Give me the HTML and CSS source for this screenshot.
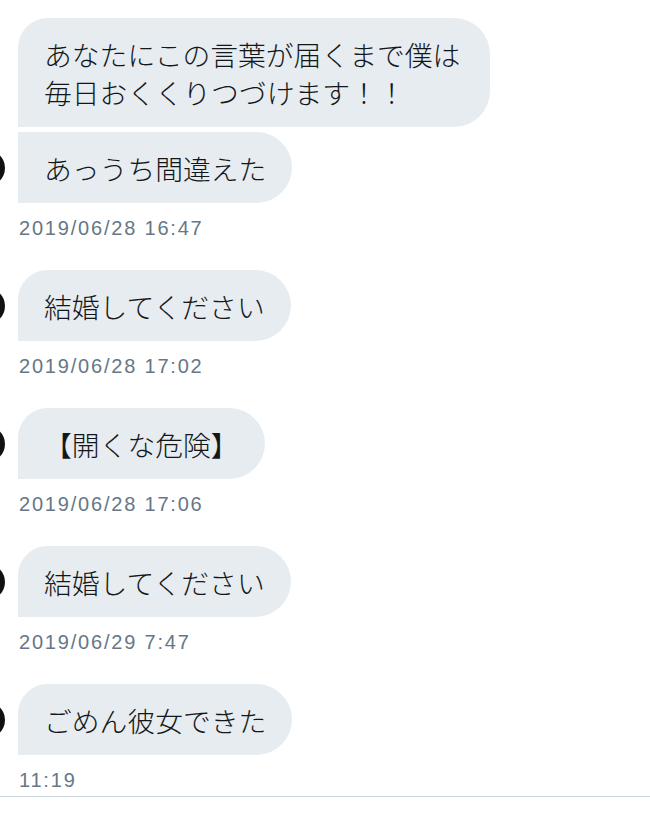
FILE: index.html
```html
<!DOCTYPE html>
<html lang="ja">
<head>
  <meta charset="UTF-8">
  <title>メッセージ</title>
  <link rel="stylesheet" href="styles.css">
</head>
<body>

<div class="chat">
  <div class="grupo">
    <div class="linha">
      <div class="avatar vazio"></div>
      <div class="balao primeiro">あなたにこの言葉が届くまで僕は毎日おくくりつづけます！！</div>
    </div>
    <div class="linha">
      <div class="avatar"></div>
      <div class="balao seguinte">あっうち間違えた</div>
    </div>
    <div class="hora">2019/06/28 16:47</div>
  </div>

  <div class="grupo">
    <div class="linha">
      <div class="avatar"></div>
      <div class="balao">結婚してください</div>
    </div>
    <div class="hora">2019/06/28 17:02</div>
  </div>

  <div class="grupo">
    <div class="linha">
      <div class="avatar"></div>
      <div class="balao">【開くな危険】</div>
    </div>
    <div class="hora">2019/06/28 17:06</div>
  </div>

  <div class="grupo">
    <div class="linha">
      <div class="avatar"></div>
      <div class="balao">結婚してください</div>
    </div>
    <div class="hora">2019/06/29 7:47</div>
  </div>

  <div class="grupo ultimo">
    <div class="linha">
      <div class="avatar"></div>
      <div class="balao">ごめん彼女できた</div>
    </div>
    <div class="hora">11:19</div>
  </div>
</div>

<div class="divisor"></div>

</body>
</html>
```

FILE: styles.css
```css
* {
  box-sizing: border-box;
  margin: 0;
  padding: 0;
}

body {
  background: #fff;
  width: 650px;
  height: 820px;
  overflow: hidden;
  font-family: 'Noto Sans CJK JP', 'Noto Sans', sans-serif;
}

.chat {
  padding-top: 18px;
}

.grupo {
  margin-bottom: 30px;
}

.grupo.ultimo {
  margin-bottom: 4px;
}

.linha {
  display: flex;
  align-items: center;
  gap: 13px;
  margin-left: -31px;
}

.linha + .linha {
  margin-top: 5px;
}

.avatar {
  width: 36px;
  height: 36px;
  border-radius: 50%;
  background: #111;
  flex-shrink: 0;
}

.avatar.vazio {
  background: transparent;
}

.balao {
  background: #e6ecf0;
  color: #14171a;
  font-size: 27.8px;
  font-weight: 300;
  line-height: 38px;
  padding: 16.5px 26px;
  max-width: 472px;
  border-radius: 30px 36px 36px 0;
}

.balao.seguinte {
  border-radius: 0 36px 36px 0;
}

.hora {
  margin-top: 13px;
  margin-left: 19px;
  height: 24px;
  line-height: 24px;
  font-family: 'Liberation Sans', sans-serif;
  font-size: 20px;
  letter-spacing: 1.8px;
  color: #657786;
}

.divisor {
  height: 1px;
  background: #ccd6dd;
}
```
